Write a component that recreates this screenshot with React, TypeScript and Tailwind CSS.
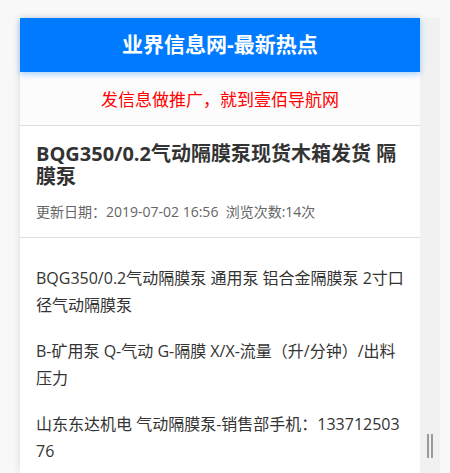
import React from "react";

export default function App() {
  const font = { fontFamily: '"Open Sans", "Noto Sans CJK SC", sans-serif' };
  return (
    <div className="w-[450px] h-[473px] bg-[#f8f8f8] overflow-hidden flex pt-[18px]" style={font}>
      <div className="w-[20px] shrink-0" />
      <div className="w-[400px] shrink-0 bg-white shadow-[0_0_8px_rgba(0,0,0,0.12)] flex flex-col">
        <div className="h-[54px] bg-[#007bff] flex items-center justify-center text-white text-[21px] font-bold shadow-[0_2px_6px_rgba(0,123,255,0.35)] relative z-10">
          业界信息网-最新热点
        </div>
        <div className="h-[54px] bg-[#fcfcfc] border-b border-[#dddddd] flex items-center justify-center text-[#ff0000] text-[17px] pt-[2px]">
          发信息做推广，就到壹佰导航网
        </div>
        <div className="px-[16px] pt-[16px] pb-[15px] border-b border-[#dddddd]">
          <h1 className="text-[20px] leading-[23px] font-bold text-[#333333] m-0">
            BQG350/0.2气动隔膜泵现货木箱发货 隔膜泵
          </h1>
          <div className="mt-[14px] text-[14px] leading-[20px] text-[#666666] whitespace-pre">
            更新日期：2019-07-02 16:56  浏览次数:14次
          </div>
        </div>
        <div className="px-[16px] pt-[27px] text-[16px] leading-[27px] text-[#333333] flex flex-col gap-[19px]">
          <p>BQG350/0.2气动隔膜泵 通用泵 铝合金隔膜泵 2寸口径气动隔膜泵</p>
          <p>B-矿用泵 Q-气动 G-隔膜 X/X-流量（升/分钟）/出料压力</p>
          <p className="break-all">山东东达机电 气动隔膜泵-销售部手机：13371250376</p>
        </div>
      </div>
      <div className="w-[20px] shrink-0 bg-[#f1f1f1] flex flex-col justify-end items-center pb-[15px]">
        <div className="flex gap-[2px] h-[24px]">
          <div className="w-[2px] bg-[#9a9a9a]" />
          <div className="w-[2px] bg-[#9a9a9a]" />
        </div>
      </div>
    </div>
  );
}
